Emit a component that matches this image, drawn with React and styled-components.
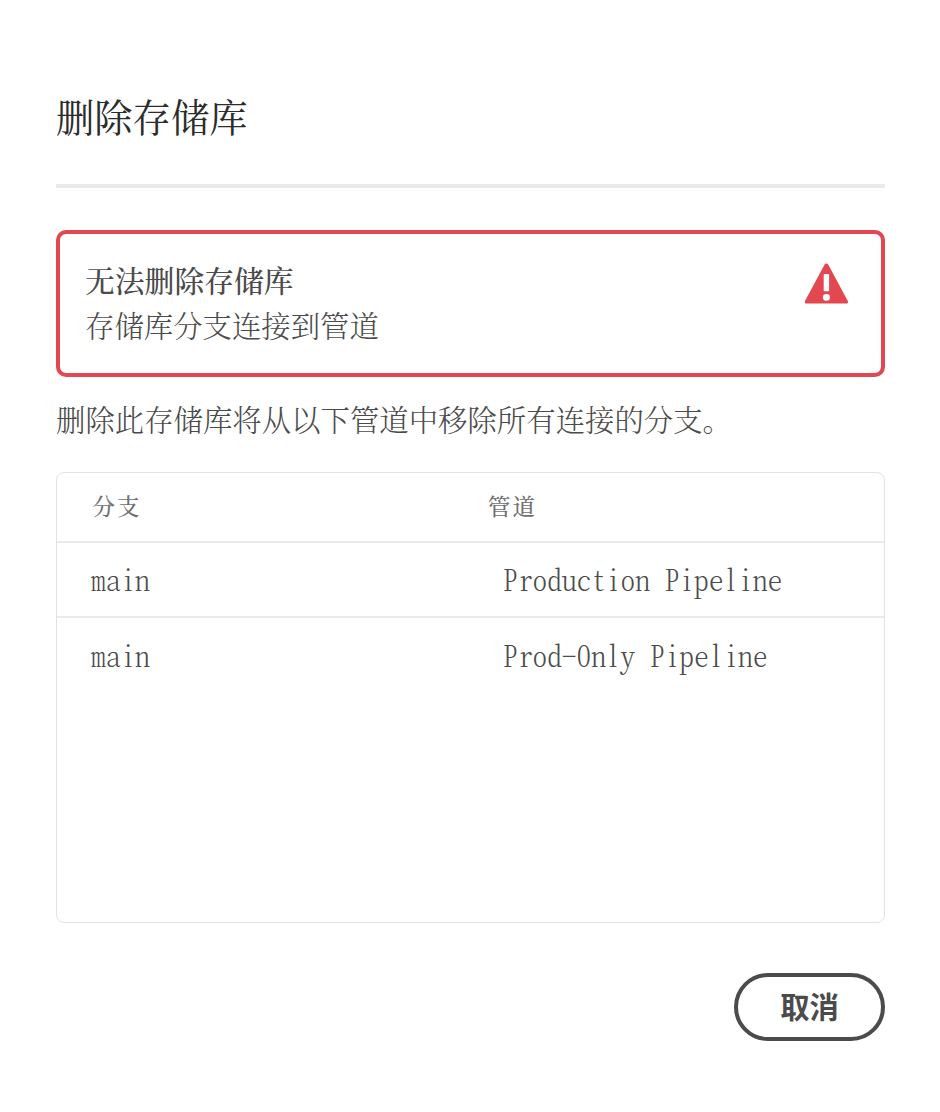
import React from "react";
import styled, { createGlobalStyle } from "styled-components";

const GlobalStyle = createGlobalStyle`
  *, *::before, *::after { box-sizing: border-box; }
  body {
    margin: 0;
    background: #fff;
    color: #4b4b4b;
    font-family: "Noto Serif CJK SC", "Noto Sans CJK SC", sans-serif;
    font-weight: 300;
  }
`;

const Dialog = styled.main`
  display: flex;
  flex-direction: column;
  width: 940px;
  height: 1112px;
  padding: 89px 55px 71px 56px;
`;

const Title = styled.h1`
  margin: 0;
  height: 95px;
  font-size: 38.3px;
  font-weight: 400;
  line-height: 54px;
  color: #2c2c2c;
`;

const Divider = styled.hr`
  flex: none;
  width: 100%;
  height: 4px;
  margin: 0 0 42px;
  border: 0;
  background: #eaeaea;
`;

const Alert = styled.section`
  display: flex;
  justify-content: space-between;
  height: 147px;
  padding: 24px 33px 0 25px;
  border: 4px solid #e34850;
  border-radius: 10px;
`;

const AlertTitle = styled.h2`
  margin: 0;
  font-size: 29.8px;
  font-weight: 500;
  line-height: 44px;
`;

const BodyText = styled.p`
  margin: 0;
  font-size: 29.4px;
  line-height: 44px;
`;

const Description = styled(BodyText)`
  margin: 19px 0 32px;
`;

const AlertIcon = styled.svg`
  width: 44px;
  height: 41px;
  margin-top: 5px;
`;

const Table = styled.div`
  height: 451px;
  border: 1.5px solid #e2e2e2;
  border-radius: 8px;
`;

const Row = styled.div`
  display: grid;
  grid-template-columns: 412px 1fr;
  align-items: center;
  height: 75px;
  padding: 0 34px 4px;
  border-bottom: ${(p) => (p.$last ? 0 : 2)}px solid #eaeaea;
`;

const HeaderRow = styled(Row)`
  grid-template-columns: 395.5px 1fr;
  height: 70px;
  padding-left: 35.5px;
`;

const HeaderCell = styled.span`
  font-size: 22.5px;
  font-weight: 500;
  letter-spacing: 2px;
  color: #707070;
`;

const Cell = styled.span`
  font-size: 29.4px;
  font-weight: 200;
  font-feature-settings: "hwid" 1;
  line-height: 44px;
  white-space: pre;
`;

const Footer = styled.footer`
  display: flex;
  justify-content: flex-end;
  margin-top: 50px;
`;

const Button = styled.button`
  width: 151px;
  height: 68px;
  padding: 0 0 4px;
  border: 4px solid #4b4b4b;
  border-radius: 34px;
  background: #fff;
  color: #4b4b4b;
  font-family: "Noto Sans CJK SC", sans-serif;
  font-size: 29.35px;
  font-weight: 700;
`;

const branches = [
  { branch: "main", pipeline: "Production Pipeline" },
  { branch: "main", pipeline: "Prod-Only Pipeline" },
];

export default function App() {
  return (
    <>
      <GlobalStyle />
      <Dialog lang="zh-CN">
        <Title>删除存储库</Title>
        <Divider />
        <Alert>
          <div>
            <AlertTitle>无法删除存储库</AlertTitle>
            <BodyText>存储库分支连接到管道</BodyText>
          </div>
          <AlertIcon viewBox="0 0 44 41" aria-hidden="true">
            <path
              d="M20.6 1.4a2.1 2.1 0 0 1 3.6 0L43.8 37.9a1.8 1.8 0 0 1-1.6 2.7H2.6a1.8 1.8 0 0 1-1.6-2.7z"
              fill="#e34850"
            />
            <rect x="19.7" y="11" width="5.4" height="17.2" rx="0.8" fill="#fff" />
            <ellipse cx="22.4" cy="34.4" rx="3.5" ry="3.3" fill="#fff" />
          </AlertIcon>
        </Alert>
        <Description>删除此存储库将从以下管道中移除所有连接的分支。</Description>
        <Table>
          <HeaderRow>
            <HeaderCell>分支</HeaderCell>
            <HeaderCell>管道</HeaderCell>
          </HeaderRow>
          {branches.map((item, i) => (
            <Row key={item.pipeline} $last={i === branches.length - 1}>
              <Cell>{item.branch}</Cell>
              <Cell>{item.pipeline}</Cell>
            </Row>
          ))}
        </Table>
        <Footer>
          <Button type="button">取消</Button>
        </Footer>
      </Dialog>
    </>
  );
}
